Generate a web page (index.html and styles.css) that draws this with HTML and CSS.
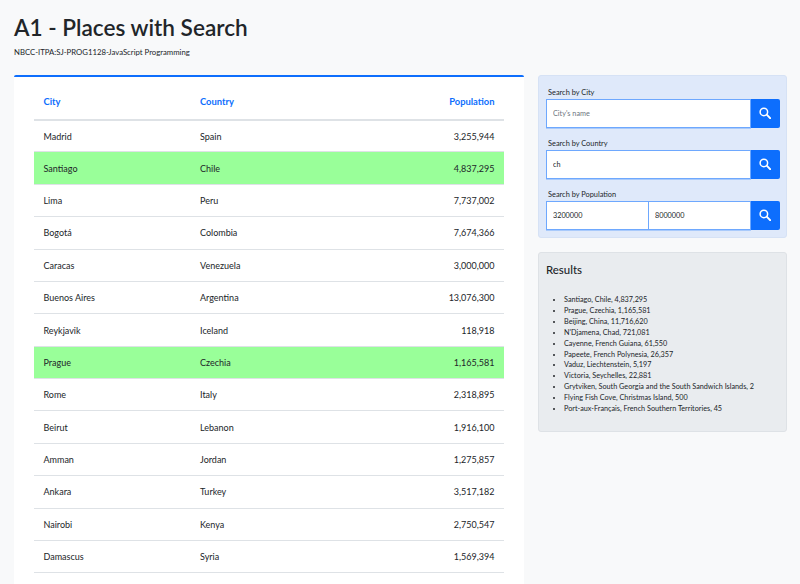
FILE: index.html
```html
<!DOCTYPE html>
<html>
    <head>
        <title>A1 - Places with Search</title>
        <link rel="stylesheet" href="styles.css">
    </head>
    <body>
        <header class="page-head">
            <h1>A1 - Places with Search</h1>
            <p>NBCC-ITPA:SJ-PROG1128-JavaScript Programming</p>
        </header>
        <main class="layout">
            <section class="table-card">
                <table>
                    <thead>
                        <tr><th>City</th><th>Country</th><th class="num">Population</th></tr>
                    </thead>
                    <tbody>
                        <tr><td>Madrid</td><td>Spain</td><td class="num">3,255,944</td></tr>
                        <tr class="match"><td>Santiago</td><td>Chile</td><td class="num">4,837,295</td></tr>
                        <tr><td>Lima</td><td>Peru</td><td class="num">7,737,002</td></tr>
                        <tr><td>Bogotá</td><td>Colombia</td><td class="num">7,674,366</td></tr>
                        <tr><td>Caracas</td><td>Venezuela</td><td class="num">3,000,000</td></tr>
                        <tr><td>Buenos Aires</td><td>Argentina</td><td class="num">13,076,300</td></tr>
                        <tr><td>Reykjavik</td><td>Iceland</td><td class="num">118,918</td></tr>
                        <tr class="match"><td>Prague</td><td>Czechia</td><td class="num">1,165,581</td></tr>
                        <tr><td>Rome</td><td>Italy</td><td class="num">2,318,895</td></tr>
                        <tr><td>Beirut</td><td>Lebanon</td><td class="num">1,916,100</td></tr>
                        <tr><td>Amman</td><td>Jordan</td><td class="num">1,275,857</td></tr>
                        <tr><td>Ankara</td><td>Turkey</td><td class="num">3,517,182</td></tr>
                        <tr><td>Nairobi</td><td>Kenya</td><td class="num">2,750,547</td></tr>
                        <tr><td>Damascus</td><td>Syria</td><td class="num">1,569,394</td></tr>
                    </tbody>
                </table>
            </section>
            <aside class="side">
                <section class="search-card">
                    <label>Search by City</label>
                    <div class="search-row">
                        <input type="text" placeholder="City's name"/>
                        <button>
                            <svg viewBox="0 0 16 16" width="12" height="12"><circle cx="6.5" cy="6.5" r="5" fill="none" stroke="#fff" stroke-width="2"/><path d="M10.3 10.3 15 15" stroke="#fff" stroke-width="2.4" stroke-linecap="round"/></svg>
                        </button>
                    </div>
                    <label>Search by Country</label>
                    <div class="search-row">
                        <input type="text" value="ch"/>
                        <button>
                            <svg viewBox="0 0 16 16" width="12" height="12"><circle cx="6.5" cy="6.5" r="5" fill="none" stroke="#fff" stroke-width="2"/><path d="M10.3 10.3 15 15" stroke="#fff" stroke-width="2.4" stroke-linecap="round"/></svg>
                        </button>
                    </div>
                    <label>Search by Population</label>
                    <div class="search-row">
                        <input type="text" value="3200000"/>
                        <input type="text" value="8000000"/>
                        <button>
                            <svg viewBox="0 0 16 16" width="12" height="12"><circle cx="6.5" cy="6.5" r="5" fill="none" stroke="#fff" stroke-width="2"/><path d="M10.3 10.3 15 15" stroke="#fff" stroke-width="2.4" stroke-linecap="round"/></svg>
                        </button>
                    </div>
                </section>
                <section class="results-card">
                    <h2>Results</h2>
                    <ul>
                        <li>Santiago, Chile, 4,837,295</li>
                        <li>Prague, Czechia, 1,165,581</li>
                        <li>Beijing, China, 11,716,620</li>
                        <li>N'Djamena, Chad, 721,081</li>
                        <li>Cayenne, French Guiana, 61,550</li>
                        <li>Papeete, French Polynesia, 26,357</li>
                        <li>Vaduz, Liechtenstein, 5,197</li>
                        <li>Victoria, Seychelles, 22,881</li>
                        <li>Grytviken, South Georgia and the South Sandwich Islands, 2</li>
                        <li>Flying Fish Cove, Christmas Island, 500</li>
                        <li>Port-aux-Français, French Southern Territories, 45</li>
                    </ul>
                </section>
            </aside>
        </main>
    </body>
</html>
```
FILE: styles.css
```css
html, body{
    height: 100%;
    overflow: hidden;
}
body{
    margin: 0;
    font-family: "Lato", sans-serif;
    font-size: 9px;
    color: #212529;
    background-color: #f8f9fa;
}
.page-head{
    padding: 13px 14px 0 14px;
    height: 61px;
    box-sizing: border-box;
}
.page-head h1{
    margin: 0;
    font-size: 22.6px;
    line-height: 30px;
    font-weight: 600;
}
.page-head p{
    margin: 3px 0 0 0;
    font-size: 7.75px;
    line-height: 12px;
}
.layout{
    display: flex;
    gap: 14px;
    padding: 0 13px 0 14px;
    align-items: flex-start;
    margin-top: 14px;
}
.table-card{
    width: 510px;
    flex: none;
    box-sizing: border-box;
    height: 520px;
    padding: 0 20px;
    background-color: #fff;
    border-top: 2px solid #0d6efd;
    border-radius: 2px 2px 0 0;
}
table{
    width: 100%;
    border-collapse: collapse;
    table-layout: fixed;
}
th, td{
    padding: 0 9.5px;
    text-align: left;
    border-bottom: 1px solid #dee2e6;
}
th:nth-child(1), td:nth-child(1){
    width: 137.5px;
}
th:nth-child(2), td:nth-child(2){
    width: 176px;
}
th{
    height: 34.6px;
    padding-top: 7px;
    font-size: 9.4px;
    color: #0d6efd;
    font-weight: 700;
    border-bottom: 2px solid #dee2e6;
}
td{
    height: 32.38px;
    box-sizing: border-box;
}
.num{
    text-align: right;
}
.match td{
    background-color: #99ff99;
}
.side{
    width: 249px;
    flex: none;
    display: flex;
    flex-direction: column;
    gap: 14px;
}
.search-card{
    height: 163px;
    box-sizing: border-box;
    padding: 10px 6px 0 7px;
    background-color: #dfe9fa;
    border: 1px solid #d6e2f5;
    border-radius: 3px;
}
.search-card label{
    display: block;
    padding-left: 2px;
    font-size: 7.4px;
    line-height: 13px;
}
.search-row{
    display: flex;
    height: 29px;
    margin-bottom: 9px;
}
.search-row input{
    flex: 1;
    min-width: 0;
    box-sizing: border-box;
    height: 100%;
    margin: 0;
    padding: 0 6px;
    font: inherit;
    font-size: 7.25px;
    color: #212529;
    background-color: #fff;
    border: 1px solid #6ea8fe;
    box-shadow: 0 1px 0 #a9cafb;
    outline: none;
}
.search-row input + input{
    border-left: 0;
}
.search-row input::placeholder{
    color: #6c757d;
}
.search-row button{
    width: 29px;
    flex: none;
    padding: 0 2px 2px 0;
    display: flex;
    align-items: center;
    justify-content: center;
    background-color: #0d6efd;
    border: none;
    border-radius: 0 2px 2px 0;
}
.results-card{
    height: 180px;
    box-sizing: border-box;
    padding: 9px 7px 0 7px;
    background-color: #e9ecef;
    border: 1px solid #dee2e6;
    border-radius: 3px;
}
.results-card h2{
    margin: 0;
    font-size: 11.4px;
    line-height: 15px;
    font-weight: 500;
}
.results-card ul{
    margin: 18px 0 0 0;
    padding-left: 18px;
    font-size: 7.25px;
}
.results-card li{
    line-height: 10.9px;
}
```
